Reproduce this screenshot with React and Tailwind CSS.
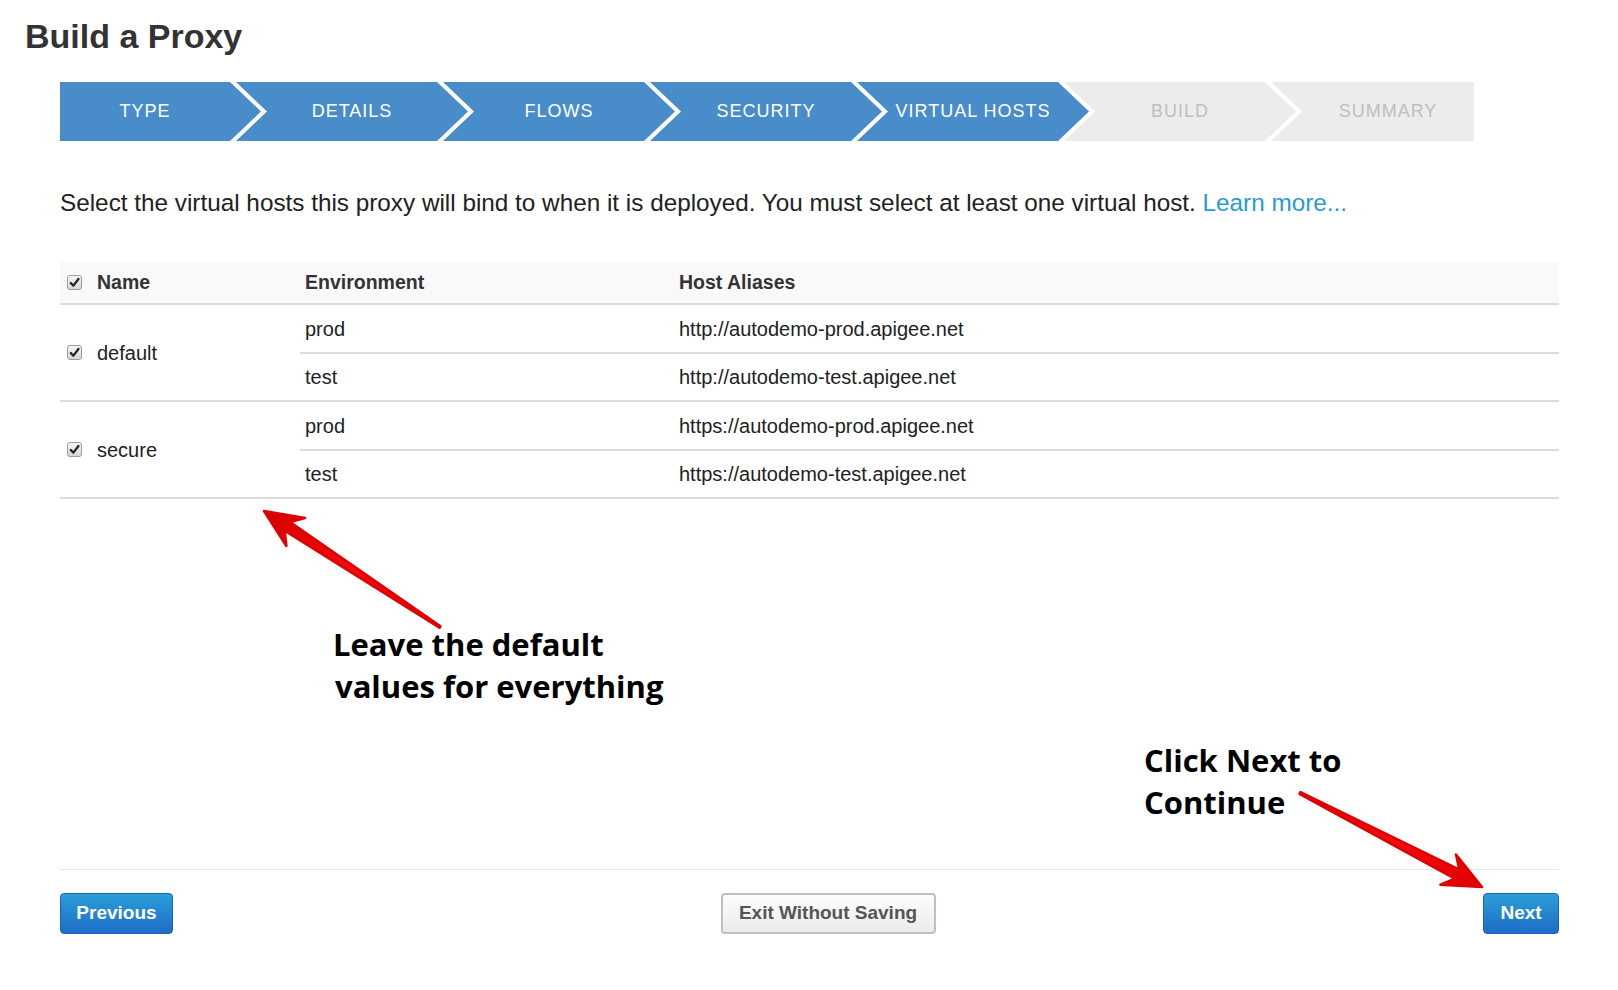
import React from 'react';

const steps = [
  { label: 'TYPE', done: true },
  { label: 'DETAILS', done: true },
  { label: 'FLOWS', done: true },
  { label: 'SECURITY', done: true },
  { label: 'VIRTUAL HOSTS', done: true },
  { label: 'BUILD', done: false },
  { label: 'SUMMARY', done: false },
];

const firstStep =
  'w-[201px] pr-[31px] [clip-path:polygon(0_0,calc(100%_-_31px)_0,100%_50%,calc(100%_-_31px)_100%,0_100%)]';
const midStep =
  'w-[232px] -ml-[25px] px-[31px] [clip-path:polygon(0_0,calc(100%_-_31px)_0,100%_50%,calc(100%_-_31px)_100%,0_100%,31px_50%)]';
const lastStep =
  'w-[203px] -ml-[25px] pl-[31px] [clip-path:polygon(0_0,100%_0,100%_100%,0_100%,31px_50%)]';

const hosts = [
  {
    name: 'default',
    envs: [
      { env: 'prod', alias: 'http://autodemo-prod.apigee.net' },
      { env: 'test', alias: 'http://autodemo-test.apigee.net' },
    ],
  },
  {
    name: 'secure',
    envs: [
      { env: 'prod', alias: 'https://autodemo-prod.apigee.net' },
      { env: 'test', alias: 'https://autodemo-test.apigee.net' },
    ],
  },
];

function Checkbox() {
  return (
    <span className="flex items-center justify-center w-[15px] h-[15px] rounded-[3px] border border-[#9c9c9c] bg-gradient-to-b from-[#f6f6f6] to-[#d6d6d6]">
      <svg width="11" height="11" viewBox="0 0 10 10">
        <path d="M1.6 5.4 L4 7.9 L8.6 1.8" fill="none" stroke="#222" strokeWidth="2" strokeLinecap="round" strokeLinejoin="round" />
      </svg>
    </span>
  );
}

function Arrows() {
  return (
    <svg className="absolute left-0 top-0 pointer-events-none" width="1618" height="990" viewBox="0 0 1618 990">
      <defs>
        <linearGradient id="redfill" x1="0" y1="0" x2="1" y2="1">
          <stop offset="0" stopColor="#d40000" />
          <stop offset="0.5" stopColor="#f20d0d" />
          <stop offset="1" stopColor="#e00000" />
        </linearGradient>
      </defs>
      {/* arrow pointing at the table */}
      <polygon
        points="264,511 305,518 290,522 440.5,626.2 439.5,627.8 284.7,530.6 286.4,546"
        fill="url(#redfill)"
        stroke="#e00000"
        strokeWidth="2.5"
        strokeLinejoin="round"
      />
      {/* arrow pointing at Next */}
      <polygon
        points="1482,887 1440.4,884.7 1454.8,878.6 1299.5,793.9 1300.5,792.1 1459.4,869.7 1456,854.5"
        fill="url(#redfill)"
        stroke="#e00000"
        strokeWidth="2.5"
        strokeLinejoin="round"
      />
    </svg>
  );
}

export default function App() {
  return (
    <div className="relative w-full min-h-[990px] bg-white text-[#333] font-['Liberation_Sans',Arial,sans-serif]">
      {/* Title */}
      <h1 className="pt-[16px] pl-[25px] h-[56px] text-[34px] leading-[40px] font-bold text-[#333]">Build a Proxy</h1>

      <div className="pl-[60px] pr-[59px]">
        {/* Wizard steps */}
        <div className="flex mt-[26px] h-[59px]">
          {steps.map((s, i) => (
            <div
              key={s.label}
              className={`${i === 0 ? firstStep : i === steps.length - 1 ? lastStep : midStep} ${
                s.done ? 'bg-[#488cc9] text-white' : 'bg-[#ececec] text-[#bebebe]'
              } h-full flex items-center justify-center text-[18px] tracking-[1px] shrink-0`}
            >
              {s.label}
            </div>
          ))}
        </div>

        {/* Description */}
        <p className="mt-[47px] h-[30px] text-[24.3px] leading-[30px] text-[#222]">
          Select the virtual hosts this proxy will bind to when it is deployed. You must select at least one virtual host.{' '}
          <a href="#" className="text-[#2a9ad6]">Learn more...</a>
        </p>

        {/* Virtual hosts table */}
        <div className="mt-[44px]">
          <div className="flex items-center h-[43px] bg-[#f9f9f9] border-b-2 border-[#dcdcdc] text-[19.5px] font-bold text-[#333]">
            <div className="w-[240px] flex items-center pl-[7px] gap-[15px]">
              <Checkbox />
              <span>Name</span>
            </div>
            <div className="w-[374px] pl-[5px]">Environment</div>
            <div className="pl-[5px]">Host Aliases</div>
          </div>

          {hosts.map((h) => (
            <div key={h.name} className="flex border-b-2 border-[#dcdcdc] text-[20px] text-[#222]">
              <div className="w-[240px] flex items-center pl-[7px] gap-[15px]">
                <Checkbox />
                <span>{h.name}</span>
              </div>
              <div className="flex-1 flex flex-col">
                {h.envs.map((e, j) => (
                  <div
                    key={e.env}
                    className={`flex items-center ${j === 0 ? 'h-[49px] border-b-2 border-[#dcdcdc]' : 'h-[46px]'}`}
                  >
                    <div className="w-[374px] pl-[5px]">{e.env}</div>
                    <div className="pl-[5px]">{e.alias}</div>
                  </div>
                ))}
              </div>
            </div>
          ))}
        </div>

        {/* Footer actions */}
        <div className="mt-[370px] border-t border-[#e6e6e6] pt-[23px] flex items-center justify-between">
          <button className="w-[113px] h-[41px] rounded-[4px] border border-[#1b63b3] bg-gradient-to-b from-[#2b9ed8] to-[#1f6cc6] text-white text-[19px] font-bold">
            Previous
          </button>
          <button className="w-[215px] h-[41px] rounded-[4px] border-2 border-[#bcc2c2] bg-gradient-to-b from-[#fdfdfd] to-[#ebebeb] text-[#555] text-[19px] font-bold">
            Exit Without Saving
          </button>
          <button className="w-[76px] h-[41px] rounded-[4px] border border-[#1b63b3] bg-gradient-to-b from-[#2b9ed8] to-[#1f6cc6] text-white text-[19px] font-bold">
            Next
          </button>
        </div>
      </div>

      {/* Annotations */}
      <div className="absolute left-[333px] top-[623px] text-[31px] leading-[42px] font-bold text-black font-['Open_Sans',sans-serif]">
        <div>Leave the default</div>
        <div className="pl-[2px]">values for everything</div>
      </div>
      <div className="absolute left-[1144px] top-[739px] text-[31px] leading-[42px] font-bold text-black font-['Open_Sans',sans-serif]">
        <div>Click Next to</div>
        <div>Continue</div>
      </div>

      <Arrows />
    </div>
  );
}
